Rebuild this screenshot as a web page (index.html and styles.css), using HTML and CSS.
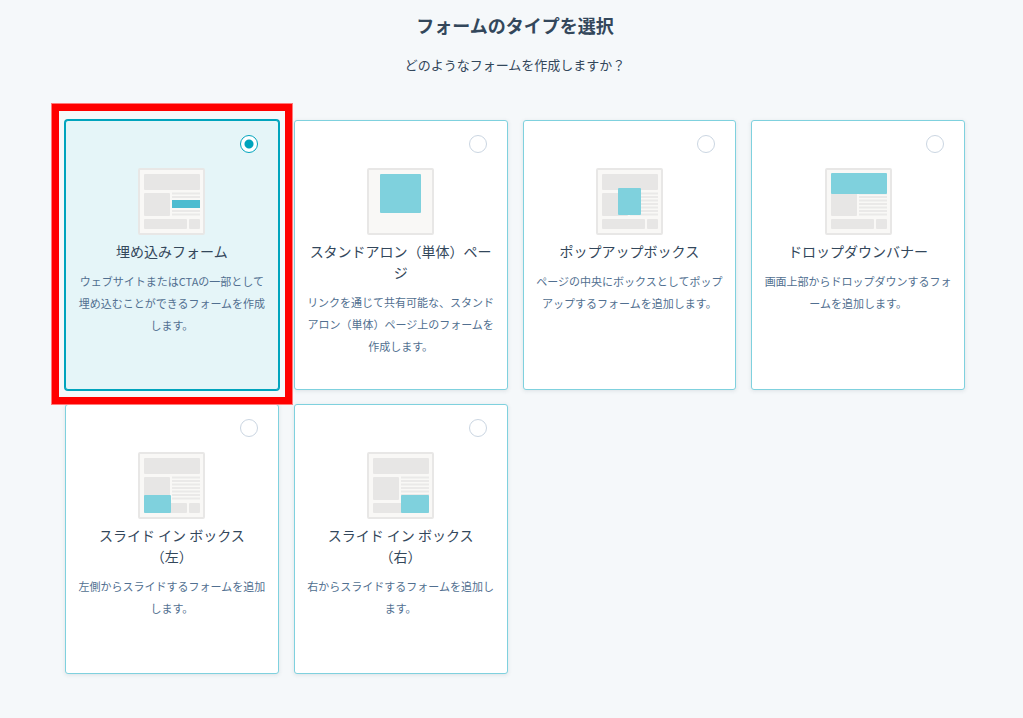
FILE: index.html
```html
<!DOCTYPE html>
<html lang="ja">
<head>
<meta charset="utf-8">
<meta name="viewport" content="width=device-width, initial-scale=1">
<title>フォームのタイプを選択</title>
<link rel="stylesheet" href="styles.css">
</head>
<body>
<svg class="defs" aria-hidden="true">
  <defs>
    <g id="frame">
      <rect x="1" y="1" width="65" height="65" rx="1" fill="#f9f8f6" stroke="#e8e7e6" stroke-width="2"/>
    </g>
    <g id="layout">
      <use href="#frame"/>
      <g fill="#e7e6e5">
        <rect x="6" y="6" width="56" height="16" rx="1"/>
        <rect x="6" y="25" width="26" height="23" rx="1"/>
        <rect x="6" y="51" width="43" height="10" rx="1"/>
        <rect x="51" y="51" width="11" height="10" rx="1"/>
      </g>
      <path d="M34 25.5h28M34 29h28M34 32.5h28M34 36h28M34 39.5h28M34 43h28M34 46.5h28" stroke="#eae9e8" stroke-width="2"/>
    </g>
  </defs>
</svg>
<main class="page">
  <h1 class="page-title" id="page-title">フォームのタイプを選択</h1>
  <p class="page-lead">どのようなフォームを作成しますか？</p>
  <div class="cards" role="radiogroup" aria-labelledby="page-title">
    <label class="card highlighted">
      <input class="card-radio" type="radio" name="form-type" value="embedded" checked>
      <svg class="card-icon" viewBox="0 0 67 67" aria-hidden="true">
        <use href="#layout"/>
        <rect x="33" y="31" width="30" height="11" fill="#f9f8f6"/>
        <rect x="34" y="32" width="28" height="8" fill="#4dbcd0"/>
      </svg>
      <span class="card-title">埋め込みフォーム</span>
      <span class="card-text">ウェブサイトまたはCTAの一部として埋め込むことができるフォームを作成します。</span>
    </label>
    <label class="card">
      <input class="card-radio" type="radio" name="form-type" value="standalone">
      <svg class="card-icon" viewBox="0 0 67 67" aria-hidden="true">
        <use href="#frame"/>
        <rect x="13" y="6" width="41" height="39" rx="1" fill="#7fd1dd"/>
      </svg>
      <span class="card-title">スタンドアロン（単体）ページ</span>
      <span class="card-text">リンクを通じて共有可能な、スタンドアロン（単体）ページ上のフォームを作成します。</span>
    </label>
    <label class="card">
      <input class="card-radio" type="radio" name="form-type" value="popup">
      <svg class="card-icon" viewBox="0 0 67 67" aria-hidden="true">
        <use href="#layout"/>
        <rect x="22" y="20" width="23" height="27" rx="1" fill="#7fd1dd"/>
      </svg>
      <span class="card-title">ポップアップボックス</span>
      <span class="card-text">ページの中央にボックスとしてポップアップするフォームを追加します。</span>
    </label>
    <label class="card">
      <input class="card-radio" type="radio" name="form-type" value="banner">
      <svg class="card-icon" viewBox="0 0 67 67" aria-hidden="true">
        <use href="#layout"/>
        <rect x="6" y="5" width="56" height="21" rx="1" fill="#7fd1dd"/>
      </svg>
      <span class="card-title">ドロップダウンバナー</span>
      <span class="card-text">画面上部からドロップダウンするフォームを追加します。</span>
    </label>
    <label class="card">
      <input class="card-radio" type="radio" name="form-type" value="slide-left">
      <svg class="card-icon" viewBox="0 0 67 67" aria-hidden="true">
        <use href="#layout"/>
        <rect x="6" y="43" width="27" height="18" rx="1" fill="#7fd1dd"/>
      </svg>
      <span class="card-title">スライド イン ボックス<br>（左）</span>
      <span class="card-text">左側からスライドするフォームを追加します。</span>
    </label>
    <label class="card">
      <input class="card-radio" type="radio" name="form-type" value="slide-right">
      <svg class="card-icon" viewBox="0 0 67 67" aria-hidden="true">
        <use href="#layout"/>
        <rect x="34" y="43" width="28" height="18" rx="1" fill="#7fd1dd"/>
      </svg>
      <span class="card-title">スライド イン ボックス<br>（右）</span>
      <span class="card-text">右からスライドするフォームを追加します。</span>
    </label>
  </div>
</main>
</body>
</html>
```
FILE: styles.css
```css
* {
  box-sizing: border-box;
}

body {
  margin: 0;
  min-height: 100vh;
  background: #f5f8fa;
  color: #33475b;
  font-family: "Noto Sans CJK JP", sans-serif;
  font-weight: 400;
}

.defs {
  display: block;
  width: 0;
  height: 0;
}

.page {
  padding: 10px 58px 44px 65px;
}

.page-title {
  margin: 0 0 15px;
  font-size: 18px;
  line-height: 30px;
  font-weight: 700;
  text-align: center;
}

.page-lead {
  margin: 0 0 45px;
  font-size: 13px;
  line-height: 20px;
  text-align: center;
}

.cards {
  display: grid;
  grid-template-columns: repeat(4, minmax(0, 1fr));
  grid-auto-rows: minmax(270px, auto);
  gap: 14px 15px;
}

.card {
  position: relative;
  display: flex;
  flex-direction: column;
  align-items: center;
  padding: 14px 12px;
  border: 1px solid #7fd1de;
  border-radius: 3px;
  background: #fff;
  box-shadow: 0 1px 4px rgba(45, 62, 80, 0.12);
  text-align: center;
  cursor: pointer;
}

.card:has(.card-radio:checked) {
  border-color: #00a4bd;
  background: #e5f5f8;
  box-shadow: 0 0 0 1px #00a4bd;
}

.highlighted::after {
  content: "";
  position: absolute;
  z-index: 1;
  inset: -17px -14px -15px;
  border: 7px solid #f00;
  outline: 1px solid #ff7a7a;
  pointer-events: none;
}

.card-radio {
  appearance: none;
  align-self: flex-end;
  width: 18px;
  height: 18px;
  margin: 0 8px 15px 0;
  border: 1px solid #cbd6e2;
  border-radius: 50%;
  background: #fff;
}

.card-radio:checked {
  border-color: #00a4bd;
  background: radial-gradient(circle, #00a4bd 4px, #fff 5px);
}

.card-icon {
  width: 67px;
  height: 67px;
  margin-bottom: 6px;
}

.card-title {
  margin-bottom: 8px;
  font-size: 14px;
  line-height: 21px;
}

.card-text {
  color: #516f90;
  font-size: 11px;
  line-height: 22px;
}
```
